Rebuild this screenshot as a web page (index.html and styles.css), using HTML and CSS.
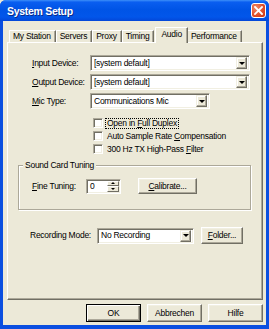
FILE: index.html
```html
<!DOCTYPE html>
<html>
<head>
<meta charset="utf-8">
<link rel="stylesheet" href="styles.css">
</head>
<body>
<div class="window">
  <div class="titlebar">
    <span class="title">System Setup</span>
    <span class="close"><svg width="9" height="9" viewBox="0 0 9 9"><path d="M1 1L8 8M8 1L1 8" stroke="#fff" stroke-width="1.8" stroke-linecap="square"/></svg></span>
  </div>
  <div class="client">
    <div class="tabs">
      <div class="tab">My Station</div>
      <div class="tab">Servers</div>
      <div class="tab">Proxy</div>
      <div class="tab">Timing</div>
      <div class="tab active">Audio</div>
      <div class="tab">Performance</div>
    </div>
    <div class="panel">
      <div class="fields">
        <div class="field">
          <span class="lbl"><u>I</u>nput Device:</span>
          <div class="combo wide"><span class="val">[system default]</span><span class="drop"><i></i></span></div>
        </div>
        <div class="field">
          <span class="lbl"><u>O</u>utput Device:</span>
          <div class="combo wide"><span class="val">[system default]</span><span class="drop"><i></i></span></div>
        </div>
        <div class="field">
          <span class="lbl"><u>M</u>ic Type:</span>
          <div class="combo mic"><span class="val">Communications Mic</span><span class="drop"><i></i></span></div>
        </div>
      </div>
      <div class="checks">
        <div class="check"><span class="box"></span><span class="ctext focus">Open in <u>F</u>ull Duplex</span></div>
        <div class="check"><span class="box"></span><span class="ctext">Auto Sample Rate <u>C</u>ompensation</span></div>
        <div class="check"><span class="box"></span><span class="ctext">300 Hz TX High-Pass <u>F</u>ilter</span></div>
      </div>
      <div class="group">
        <div class="legend">Sound Card Tuning</div>
        <div class="fine">
          <span class="lbl2"><u>F</u>ine Tuning:</span>
          <div class="spin"><span class="val">0</span><span class="spinbtns"><span class="sb"><i class="up"></i></span><span class="sb"><i></i></span></span></div>
          <span class="btn calib"><u>C</u>alibrate...</span>
        </div>
      </div>
      <div class="rec">
        <span class="lbl3">Recording Mode:</span>
        <div class="combo recc"><span class="val">No Recording</span><span class="drop"><i></i></span></div>
        <span class="btn folder"><u>F</u>older...</span>
      </div>
    </div>
    <div class="buttons">
      <span class="btn dlg default">OK</span>
      <span class="btn dlg">Abbrechen</span>
      <span class="btn dlg">Hilfe</span>
    </div>
  </div>
</div>
</body>
</html>
```

FILE: styles.css
```css
* { box-sizing: border-box; margin: 0; padding: 0; }
html, body { width: 269px; height: 329px; overflow: hidden; }
body {
  font-family: "Liberation Sans", Arial, sans-serif;
  font-size: 8.5px;
  letter-spacing: -0.25px;
  line-height: 11px;
  color: #000;
  background: #ece9d8;
}
u { text-decoration: underline; text-underline-offset: 1px; }

.window {
  width: 269px;
  height: 329px;
  display: flex;
  flex-direction: column;
  background: #0b4fe0;
  border-radius: 6px 6px 0 0;
  overflow: hidden;
}
.titlebar {
  height: 21px;
  flex: none;
  display: flex;
  align-items: center;
  padding: 0 3px 0 7px;
  background: linear-gradient(#3d8ff9 0%, #0a5ef0 10%, #0054e6 45%, #0256ea 80%, #0347d8 100%);
}
.title {
  flex: 1;
  color: #fff;
  font-weight: bold;
  font-size: 10.5px;
  letter-spacing: -0.3px;
  text-shadow: 1px 1px #0a2a8a;
  padding-top: 1px;
}
.close {
  width: 15px;
  height: 15px;
  border: 1px solid #fff;
  border-radius: 3px;
  background: radial-gradient(circle at 30% 30%, #f08a6a 0%, #e0502a 55%, #c83510 100%);
  display: flex;
  align-items: center;
  justify-content: center;
}

.client {
  flex: 1;
  margin: 0 3px 4px 3px;
  background: #ece9d8;
  display: flex;
  flex-direction: column;
  padding: 6px 3px 3px 4px;
}

/* tabs */
.tabs {
  height: 15px;
  display: flex;
  align-items: flex-end;
  margin-left: 2px;
  position: relative;
  z-index: 1;
}
.tab {
  height: 12px;
  padding: 0 4px 0 3px;
  border-top: 1px solid #fff;
  border-left: 1px solid #fff;
  border-right: 1px solid #716f64;
  box-shadow: inset -1px 0 #aca899;
  line-height: 11px;
  white-space: nowrap;
}
.tab.active {
  height: 16px;
  margin: 0 -1px -1px 1px;
  padding: 1px 5px 0 5px;
  background: #ece9d8;
}
.tab.active + .tab { border-left: none; margin-left: 1px; }

/* panel */
.panel {
  height: 258px;
  flex: none;
  border: 1px solid;
  border-color: #fff #716f64 #716f64 #fff;
  box-shadow: inset -1px -1px #aca899;
  padding: 12px 0 0 0;
  display: flex;
  flex-direction: column;
}
.fields {
  display: flex;
  flex-direction: column;
  gap: 3px;
  padding-left: 24px;
}
.field {
  display: flex;
  align-items: center;
  height: 16px;
}
.lbl { width: 58px; flex: none; white-space: nowrap; }

.combo {
  height: 16px;
  display: flex;
  align-items: center;
  background: #fff;
  border: 1px solid;
  border-color: #aca899 #fff #fff #aca899;
  box-shadow: inset 1px 1px #716f64, inset -1px -1px #f1efe2;
  padding: 2px 2px 2px 3px;
}
.combo.wide { width: 160px; }
.combo.mic { width: 120px; }
.combo.recc { width: 97px; }
.combo .val { flex: 1; white-space: nowrap; overflow: hidden; }
.drop {
  width: 11px;
  height: 12px;
  flex: none;
  background: #ece9d8;
  border: 1px solid;
  border-color: #f1efe2 #716f64 #716f64 #f1efe2;
  box-shadow: inset -1px -1px #aca899, inset 1px 1px #fff;
  display: flex;
  align-items: center;
  justify-content: center;
}
.drop i, .sb i {
  width: 0;
  height: 0;
  border-left: 3px solid transparent;
  border-right: 3px solid transparent;
  border-top: 3px solid #000;
}

.checks {
  margin-top: 9px;
  padding-left: 85px;
  display: flex;
  flex-direction: column;
}
.check {
  height: 13px;
  display: flex;
  align-items: flex-start;
}
.box {
  width: 10px;
  height: 10px;
  flex: none;
  background: #fff;
  border: 1px solid;
  border-color: #aca899 #fff #fff #aca899;
  box-shadow: inset 1px 1px #716f64, inset -1px -1px #f1efe2;
}
.ctext {
  margin-left: 2px;
  padding: 0 1px;
  height: 11px;
  line-height: 9px;
  white-space: nowrap;
  border: 1px solid transparent;
}
.ctext.focus { border: 1px dotted #000; }

.group {
  margin: 8px 0 0 10px;
  width: 233px;
  height: 45px;
  border: 1px solid #aca899;
  box-shadow: inset 1px 1px #fff, 1px 1px #fff;
}
.legend {
  width: fit-content;
  margin: -6px 0 0 4px;
  padding: 0 2px;
  background: #ece9d8;
}
.fine {
  margin-top: 7px;
  padding-left: 13px;
  display: flex;
  align-items: center;
  height: 16px;
}
.lbl2 { width: 54px; flex: none; }
.spin {
  width: 35px;
  height: 15px;
  display: flex;
  align-items: center;
  background: #fff;
  border: 1px solid;
  border-color: #aca899 #fff #fff #aca899;
  box-shadow: inset 1px 1px #716f64, inset -1px -1px #f1efe2;
  padding: 1px 1px 1px 3px;
}
.spin .val { flex: 1; }
.spinbtns {
  width: 12px;
  height: 11px;
  display: flex;
  flex-direction: column;
}
.sb {
  flex: 1;
  background: #ece9d8;
  border: 1px solid;
  border-color: #fff #716f64 #716f64 #fff;
  display: flex;
  align-items: center;
  justify-content: center;
}
.sb i { border-left-width: 2px; border-right-width: 2px; border-top-width: 2px; }
.sb i.up { border-top: none; border-bottom: 2px solid #000; }

.btn {
  display: flex;
  align-items: center;
  justify-content: center;
  background: #ece9d8;
  border: 1px solid;
  border-color: #fff #716f64 #716f64 #fff;
  box-shadow: inset -1px -1px #aca899, inset 1px 1px #f1efe2;
  white-space: nowrap;
}
.calib { width: 59px; height: 16px; margin-left: 17px; }

.rec {
  margin-top: 17px;
  padding-left: 22px;
  display: flex;
  align-items: center;
  height: 17px;
}
.lbl3 { width: 67px; flex: none; white-space: nowrap; }
.folder { width: 42px; height: 17px; margin-left: 7px; }

.buttons {
  margin-top: 4px;
  height: 18px;
  display: flex;
  justify-content: flex-end;
  gap: 6px;
}
.dlg { width: 55px; height: 18px; }
.dlg.default {
  border: 1px solid #000;
  box-shadow: inset 1px 1px #fff, inset -1px -1px #716f64, inset -2px -2px #aca899;
}
```
